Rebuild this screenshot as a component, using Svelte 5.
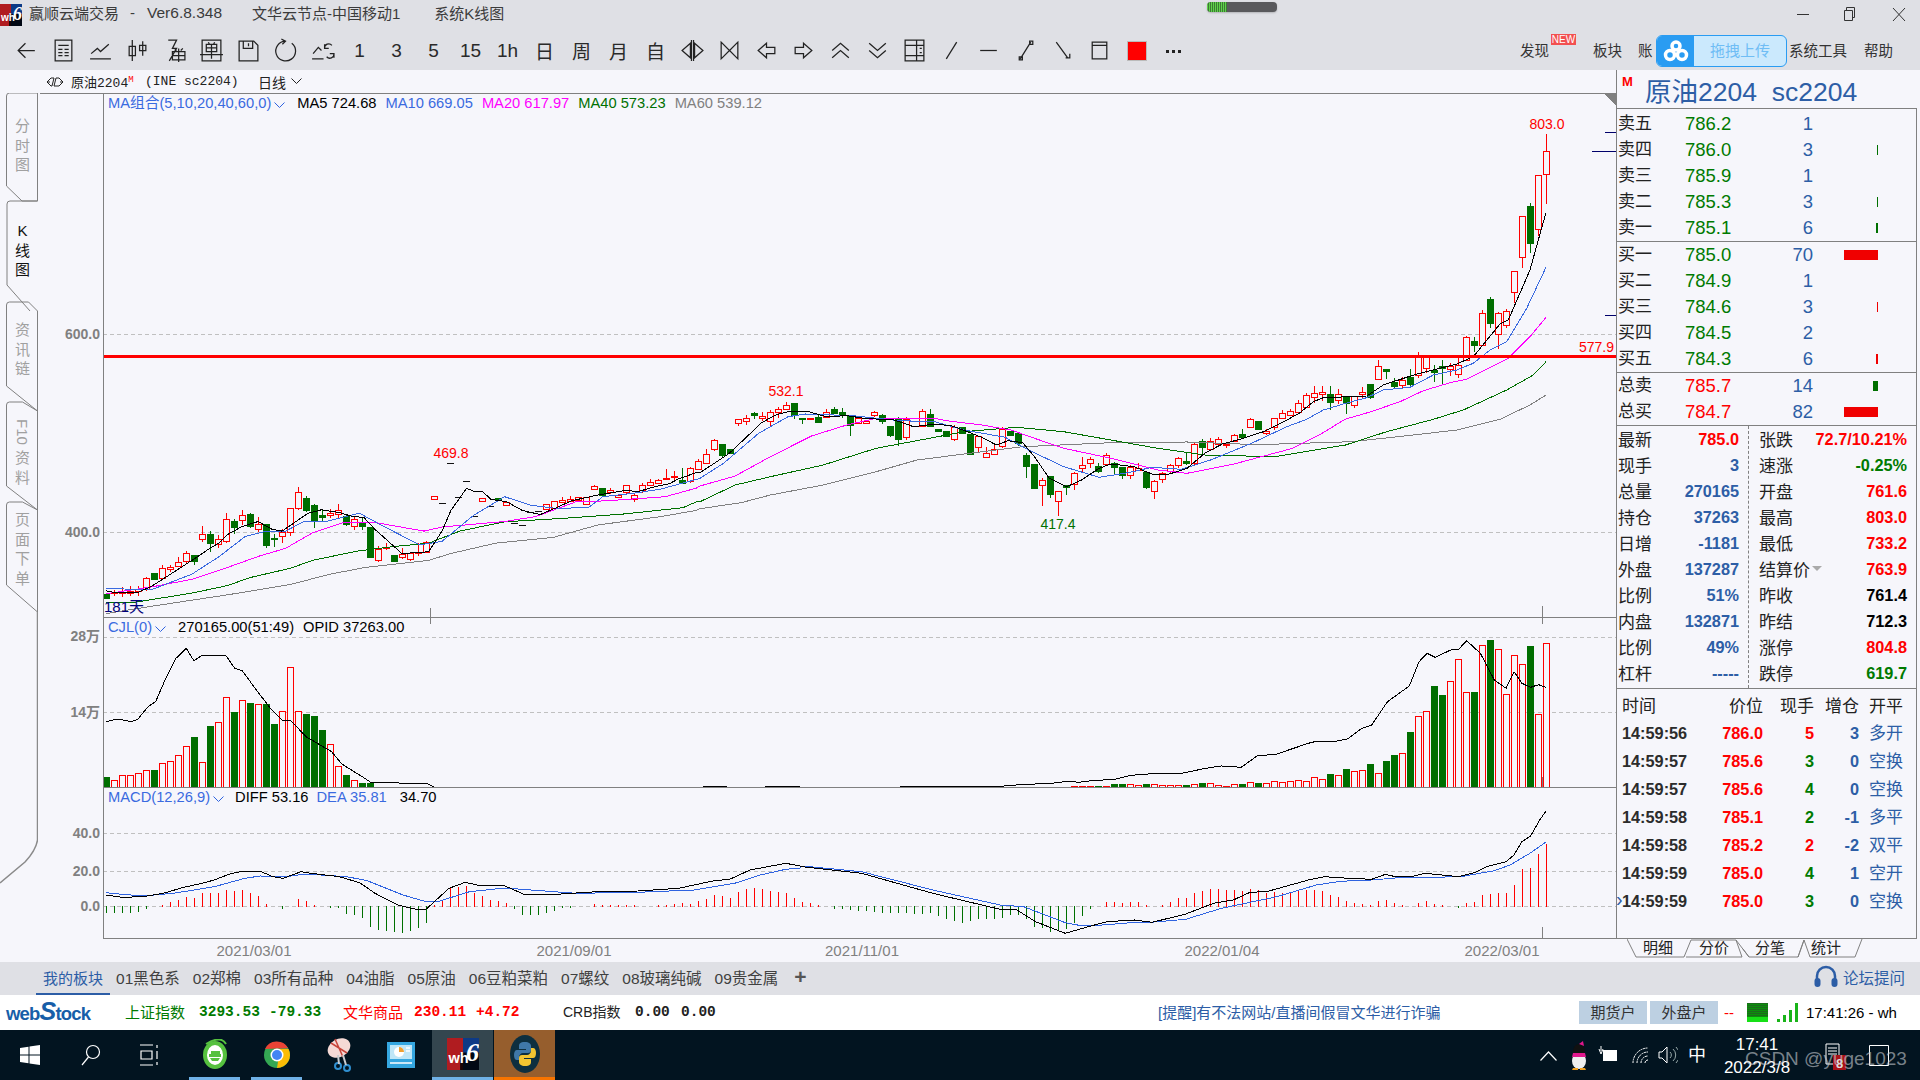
<script>
const BG = '#f6f6fb';
const z8 = ([x, y]) => [x / 2.24, 80 + y / 2.904];
const z9 = ([x, y]) => [700 + x / 1.704, 350 + y / 3];
const z12 = ([x, y]) => [1300 + x / 3, 100 + y / 3];
const z10 = ([x, y]) => [x / 1.96, 610 + y / 3];
const z11 = ([x, y]) => [1000 + x / 2.529, 610 + y / 3];
const xi = (i) => 106 + 8 * i;

// [kind(0 red,1 green,2 flat), top, bottom, wickTop, wickBottom]
const c8 = [[1,1494,1503],[0,1487,1490,1480,1497],[0,1488,1491,1472,1498],[0,1485,1489,1468,1495],[0,1477,1484,1470,1496],[0,1445,1478,1442,1480],[1,1433,1448],[0,1418,1445,1408,1447],[0,1415,1421,1408,1425],[0,1400,1410,1386,1412],[0,1374,1398,1368,1402],[1,1380,1397,1380,1406],[0,1317,1334,1296,1340],[1,1318,1346,1310,1368],[0,1334,1348,1322,1356],[0,1276,1340,1258,1342],[1,1282,1297,1275,1315],[0,1262,1279,1250,1290],[1,1260,1296,1258,1298],[0,1289,1305,1270,1310],[1,1290,1350,1290,1355],[1,1330,1334,1318,1352],[0,1314,1325,1305,1342],[0,1244,1313,1242,1320],[0,1195,1242,1183,1245],[1,1214,1248,1208,1252],[1,1234,1278,1232,1298],[1,1262,1268,1250,1282],[0,1258,1262,1245,1268],[0,1248,1260,1232,1268],[1,1265,1288,1262,1292],[0,1274,1296,1270,1304],[1,1286,1294,1270,1305],[1,1298,1385],[0,1361,1393,1354,1397],[0,1355,1358,1345,1362],[1,1380,1396],[0,1376,1386,1360,1388],[0,1375,1390,1370,1394],[0,1370,1373,1345,1378],[0,1341,1371,1338,1372],[0,1207,1218],[2,1228,1228],[2,1112,1112],[2,1210,1210],[2,1164,1164],[2,1266,1266],[0,1215,1223],[2,1236,1236],[1,1215,1220],[0,1225,1234],[2,1287,1287],[2,1293,1293],[2,1255,1255],[2,1252,1252],[0,1230,1245],[0,1222,1242],[0,1219,1226,1212,1226],[0,1216,1224,1207,1224],[0,1210,1220],[0,1210,1232],[0,1180,1189,1176,1189],[1,1186,1205],[0,1192,1196,1185,1200],[0,1206,1210],[0,1175,1197,1175,1200],[0,1205,1216,1200,1222],[0,1176,1192,1170,1196],[0,1168,1176,1160,1176],[0,1163,1170,1158,1170],[0,1155,1157,1130,1157],[0,1150,1153,1135,1160],[1,1163,1169,1127,1170],[0,1127,1165,1124,1168],[0,1107,1130,1100,1130]];
const c9 = [[0,313,338,298,340],[0,270,298,268,300],[1,283,315,283,318],[1,298,308],[0,208,220,208,226],[0,203,212,196,222],[1,190,196,186,204],[0,199,205,186,210],[0,185,214,180,224],[0,178,186,172,200],[0,164,178,156,178],[1,160,194,160,204],[1,205,208,205,220],[0,204,208],[1,202,215,195,215],[0,185,202,178,202],[1,178,188,172,188],[1,186,195,175,200],[1,199,224,199,254],[0,205,220,200,220],[0,214,220],[0,187,194,184,198],[1,196,214,192,220],[1,228,255,228,258],[1,208,268,200,285],[0,207,260,202,268],[2,228,228],[0,184,228,178,228],[1,192,228,178,228],[1,237,243],[1,244,258],[0,230,267,224,270],[1,230,248],[1,252,312],[0,258,290,258,305],[0,310,320,290,320],[0,298,312,285,312],[0,237,287,232,290],[1,242,255],[1,248,280,248,286],[1,314,348,310,380],[1,342,414],[0,391,404,385,465],[1,378,432,378,440],[0,422,452,422,495],[1,405,410,405,432],[0,370,402,365,418],[0,344,355,322,366],[0,328,338,322,350],[1,348,362,340,365],[0,316,342,308,345],[1,340,350,335,368],[1,352,375,352,385],[0,352,374,345,385],[0,354,360,340,360],[1,367,410,367,415],[0,394,424,390,444],[0,370,388,365,396],[0,344,362,342,370],[0,324,344,320,350],[1,333,340,306,342],[0,283,338,280,342],[1,273,291,268,315],[0,272,296,265,300],[0,268,282,262,282],[0,281,284,275,290],[0,256,272,252,272],[1,253,262,238,262],[0,208,230,205,230],[1,214,236],[0,243,248,236,252],[0,205,232,205,236],[0,190,203,180,203],[0,184,194,178,194],[0,158,185,150,185]];
const c12 = [[0,886,920,880,920],[0,880,892,858,905],[0,877,881,858,900],[1,883,905,858,928],[0,881,901,868,908],[1,892,908,892,940],[0,889,916,889,922],[0,877,881,862,892],[1,852,890,852,895],[0,799,838,780,838],[1,807,814,807,834],[1,846,858,835,860],[0,839,856,830,860],[1,831,851,808,855],[0,772,824,756,830],[0,770,805,770,815],[1,810,815,795,842],[1,799,804,780,852],[0,798,808,790,825],[0,795,822,775,832],[0,712,780,708,780],[1,723,735,712,752],[0,640,734,630,734],[1,598,668,590,680],[0,640,703,635,745],[0,634,675,628,680],[0,514,577,514,605],[0,349,472,349,500],[1,318,428,310,455],[0,226,388,226,405],[0,154,223,101,308]];

const toCandle = (conv) => ([k, t, b, wt, wb]) => {
  const top = Math.round(conv([0, t])[1]);
  const bot = Math.round(conv([0, b])[1]);
  return { k, top, bot, wt: Math.round(conv([0, wt ?? t])[1]), wb: Math.round(conv([0, wb ?? b])[1]) };
};
const candles = [
  ...c8.map(toCandle(z8)),
  ...c9.map(toCandle(z9)),
  ...c12.map(toCandle(z12))
].map((c, i) => ({ ...c, x: xi(i) }));

const join = (segs) => {
  let out = [];
  segs.forEach(([conv, pts], si) => {
    const next = segs[si + 1];
    const limit = next ? next[0](next[1][0])[0] : Infinity;
    out = out.concat(pts.map(conv).filter((p) => p[0] < limit));
  });
  return out.map((p) => p[0].toFixed(1) + ',' + p[1].toFixed(1)).join(' ');
};

const ma = [
  { c: '#808080', p: join([[z8,[[237,1550],[330,1530],[510,1495],[650,1465],[740,1435],[820,1415],[960,1395],[1010,1375],[1110,1345],[1240,1328],[1340,1292],[1480,1268],[1560,1250]]],[z9,[[0,476],[70,458],[120,435],[210,405],[300,365],[370,330],[450,312],[550,290],[700,278],[830,276],[950,284],[1110,275],[1200,258],[1290,240],[1370,208]]],[z12,[[600,958],[690,915],[738,885]]]]) },
  { c: '#007000', p: join([[z8,[[237,1517],[300,1517],[430,1490],[510,1468],[560,1445],[650,1418],[700,1395],[800,1368],[880,1355],[960,1345],[1030,1310],[1130,1283],[1260,1273],[1400,1260],[1530,1242],[1560,1225]]],[z9,[[0,455],[60,405],[120,380],[210,345],[300,295],[400,262],[450,245],[540,232],[620,245],[700,270],[780,295],[860,315],[980,320],[1100,285],[1170,245]]],[z12,[[400,958],[490,930],[620,870],[700,825],[738,785]]]]) },
  { c: '#ff00ff', p: join([[z8,[[237,1492],[340,1472],[430,1450],[500,1420],[580,1383],[640,1360],[700,1315],[770,1285],[840,1285],[950,1310],[990,1298],[1130,1282],[1200,1268],[1290,1225],[1360,1222],[1490,1210],[1560,1185]]],[z9,[[0,408],[60,378],[120,320],[190,258],[250,225],[300,205],[400,205],[420,212],[480,225],[530,240],[570,265],[620,295],[700,325],[780,360],[830,370],[910,342],[1010,295],[1060,250]]],[z12,[[135,958],[210,936],[300,905],[370,872],[450,848],[500,838],[625,775],[690,710],[738,652]]]]) },
  { c: '#3a6ae0', p: join([[z8,[[237,1477],[340,1480],[430,1435],[490,1385],[550,1325],[590,1312],[640,1310],[680,1282],[730,1282],[805,1258],[850,1290],[940,1350],[990,1340],[1060,1265],[1130,1210],[1190,1235],[1250,1245],[1320,1240],[1350,1210],[1420,1200],[1480,1188],[1560,1160]]],[z9,[[0,385],[40,340],[100,250],[150,200],[180,192],[260,197],[340,212],[400,215],[450,240],[520,262],[560,300],[620,350],[680,382],[730,368],[770,352],[820,358],[870,330],[940,280],[1000,230]]],[z12,[[20,958],[70,930],[130,912],[200,893],[250,870],[330,862],[400,825],[470,810],[520,790],[570,750],[620,725],[680,625],[738,502]]]]) },
  { c: '#000000', p: join([[z8,[[237,1483],[255,1488],[309,1488],[340,1470],[400,1420],[450,1378],[470,1360],[490,1345],[510,1320],[540,1298],[578,1282],[610,1305],[632,1310],[660,1285],[690,1258],[720,1248],[760,1256],[790,1268],[815,1270],[840,1305],[870,1340],[900,1375],[960,1370],[990,1310],[1010,1250],[1045,1186],[1065,1196],[1080,1194],[1100,1218],[1135,1225],[1170,1250],[1210,1262],[1250,1240],[1280,1222],[1340,1205],[1400,1192],[1430,1195],[1470,1180],[1500,1172],[1520,1158],[1560,1140]]],[z9,[[0,368],[20,345],[50,310],[80,260],[105,218],[130,194],[150,185],[185,185],[215,200],[250,197],[280,205],[330,210],[365,230],[400,222],[430,228],[460,248],[480,262],[505,285],[525,272],[550,278],[570,320],[595,385],[625,410],[650,390],[680,355],[700,342],[740,350],[760,365],[775,375],[800,372],[830,355],[860,310],[890,282],[920,268],[960,245],[1000,210]]],[z12,[[0,938],[40,905],[70,893],[200,888],[250,855],[350,822],[470,792],[520,770],[600,672],[625,660],[690,510],[715,420],[738,338]]]]) }
];

// volume
const vL = [[1,501],[0,511],[0,496],[0,496],[0,490],[0,481],[1,480],[0,460],[0,454],[0,436],[0,408],[1,381],[0,457],[1,348],[0,337],[0,262],[1,306],[0,271],[1,279],[0,283],[1,282],[1,342],[0,304],[0,172],[0,304],[1,312],[1,318],[1,360],[0,403],[0,469],[1,495],[0,511],[1,519],[1,519]];
const vR = [[0,529],[0,529],[0,529],[1,529],[0,529],[1,522],[1,522],[0,523],[0,526],[1,522],[0,523],[0,526],[0,526],[0,526],[1,525],[0,523],[1,519],[0,520],[0,526],[0,529],[0,522],[1,522],[0,517],[1,519],[0,520],[0,514],[0,517],[0,514],[0,511],[0,514],[0,502],[0,508],[1,492],[0,496],[1,477],[0,484],[0,481],[1,462],[0,490],[1,453],[1,435],[0,430],[1,366],[0,319],[0,304],[1,228],[1,255],[0,214],[0,148],[0,247],[1,246],[0,106],[1,91],[0,118],[0,253],[0,136],[0,163],[1,108],[0,313],[0,100]];
const vols = [
  ...vL.map(([k, t], i) => ({ k, x: xi(i), top: Math.round(610 + t / 3) })),
  ...vR.map(([k, t], i) => ({ k, x: xi(i + 121), top: Math.round(610 + t / 3) }))
];
const cjl = join([[z10,[[208,335],[230,327],[258,335],[270,328],[290,290],[305,275],[325,205],[345,145],[365,115],[380,152],[397,135],[442,135],[460,175],[475,182],[500,235],[530,295],[553,330],[570,332],[600,380],[650,425],[670,462],[710,500],[728,518],[780,518],[785,521],[838,521],[850,530]]]]);
const cjl2 = join([[z11,[[0,529],[50,524],[130,520],[170,514],[200,517],[230,512],[290,508],[330,496],[400,490],[460,490],[520,475],[560,468],[610,472],[650,438],[700,432],[780,400],[800,394],[850,394],[880,386],[915,355],[940,345],[980,275],[1035,228],[1060,155],[1080,130],[1100,142],[1140,120],[1160,118],[1180,92],[1215,130],[1250,210],[1280,235],[1300,185],[1320,220],[1342,232],[1362,224],[1381,232]]]]);

// macd bars as zoom-y of the bar end, zero at 889
const mb = [905,905,905,905,903,893,889,885,876,870,861,864,849,850,850,840,842,840,850,858,882,887,895,888,867,872,885,888,892,892,908,912,920,947,957,960,964,966,960,952,936,885,870,835,832,828,850,858,870,872,880,895,912,912,912,906,900,892,891,889,889,882,885,885,886,886,885,889,889,885,884,882,880,883,872,866,855,858,864,846,837,834,837,843,846,849,864,875,880,884,888,893,895,897,900,900,903,905,905,906,906,908,910,905,915,925,930,935,930,925,925,925,920,912,912,925,948,952,962,960,955,935,915,893,889,876,876,880,876,876,886,888,885,876,864,864,849,843,837,837,840,841,843,837,840,849,846,849,846,843,840,840,843,855,861,873,879,882,885,873,870,879,885,889,879,873,882,886,889,890,879,876,855,852,849,849,825,777,774,732,701];
const macdBars = mb.map((v, i) => ({ x: xi(i), y: Math.round(610 + v / 3), k: v > 889 ? 1 : 0 })).filter((b) => b.y !== 906);
const diff = join([[z10,[[208,855],[240,862],[280,860],[320,850],[360,832],[390,822],[420,810],[450,792],[475,784],[510,784],[535,800],[555,805],[590,785],[610,790],[665,800],[705,818],[735,850],[780,885],[815,898],[835,898],[880,835],[912,817],[935,825],[990,828],[1030,855],[1090,853],[1160,846],[1250,843],[1330,835],[1400,812],[1430,808],[1470,780],[1540,760],[1568,768]]],[z11,[[-500,770],[-350,790],[-170,850],[0,898],[40,898],[90,935],[165,970],[230,948],[270,935],[340,930],[385,937],[470,912],[540,880],[590,870],[630,848],[680,843],[780,810],[820,800],[870,804],[940,808],[975,793],[1000,800],[1040,800],[1075,790],[1160,800],[1200,788],[1230,770],[1280,755],[1300,735],[1320,695],[1342,678],[1365,630],[1381,603]]]]);
const dea = join([[z10,[[208,848],[240,853],[280,858],[340,850],[420,830],[480,805],[510,798],[560,800],[600,792],[680,800],[720,812],[790,855],[835,875],[860,874],[920,845],[990,834],[1040,840],[1130,850],[1250,847],[1360,840],[1440,820],[1490,795],[1540,778],[1568,774]]],[z11,[[-500,768],[-350,785],[-170,840],[0,885],[60,890],[165,938],[200,946],[250,946],[330,938],[390,936],[470,928],[560,895],[700,860],[800,825],[860,814],[940,810],[1000,804],[1165,800],[1250,782],[1290,765],[1340,730],[1381,696]]]]);

const grids = [334, 532, 637, 712, 833, 871, 906];
const axis = [['600.0',334],['400.0',532],['28万',636],['14万',712],['40.0',833],['20.0',871],['0.0',906]];
const dates = [['2021/03/01',254],['2021/09/01',574],['2021/11/01',862],['2022/01/04',1222],['2022/03/01',1502]];

const tools = [
  { d:'M20 12H4M11 5l-7 7 7 7' },
  { d:'M4 2h16v20H4zM7 7h10M7 11h4M13 11h4M7 14h4M13 14h4M7 17h4M13 17h4' },
  { d:'M2 20h20M3 15l6-5 3 3 8-7' },
  { d:'M7 2v20M4 8h6v9H4zM17 3v14M14 7h6v5h-6z' },
  { d:'M6 2h8l-4 8h4L7 22M10 13h12v8H10zM16 10v13M10 17h12M12 10l2 2M20 10l-2 2' },
  { d:'M3 2h18v20H3zM1 16h22M7 6h10v7H7zM7 9.500h10M12 6v14M9 4l1 2M15 4l-1 2' },
  { d:'M3 3h14l4 4v15H3zM7 3v7h9V3M12 5v3M3 22h18' },
  { d:'M12 3a9.500 9.500 0 1 0 6 2M8 1l4 2-3 3' },
  { d:'M2 20h11M3 15l5-6 3 3M21 7a4 4 0 0 0-7 3M14 6v4h4M16 18a4 4 0 0 0 7-3M23 19v-4h-4' },
  { t:'1' },{ t:'3' },{ t:'5' },{ t:'15' },{ t:'1h' },{ t:'日' },{ t:'周' },{ t:'月' },{ t:'自' },
  { d:'M10 5l-8 7 8 7zM14 5l8 7-8 7zM11 2v20M13 2v20' },
  { d:'M4 4l8 8-8 8zM20 4l-8 8 8 8z' },
  { d:'M12 5l-8 7 8 7v-4h8V9h-8z' },
  { d:'M12 5l8 7-8 7v-4H4V9h8z' },
  { d:'M4 12l8-7 8 7M4 19l8-7 8 7' },
  { d:'M4 5l8 7 8-7M4 12l8 7 8-7' },
  { d:'M3 2h18v20H3zM3 7h18M3 17h18M14 2v20M17 10h2M17 14h2' },
  { d:'M7 20L17 4' },
  { d:'M4 12h16' },
  { d:'M7 20L17 4M6 18h3v3H6zM16 3h3v3h-3z' },
  { d:'M6 4l11 15M15 19h4v-4' },
  { d:'M5 4h14v16H5zM5 7h14' },
  { red:true },
  { dots:true }
];

const asks = [['卖五','786.2',1,0],['卖四','786.0',3,1],['卖三','785.9',1,0],['卖二','785.3',3,1],['卖一','785.1',6,2]];
const bids = [['买一','785.0',70,34],['买二','784.9',1,0],['买三','784.6',3,1],['买四','784.5',2,0],['买五','784.3',6,2]];
const left = [['最新','785.0','r'],['现手','3','b'],['总量','270165','b'],['持仓','37263','b'],['日增','-1181','b'],['外盘','137287','b'],['比例','51%','b'],['内盘','132871','b'],['比例','49%','b'],['杠杆','-----','b']];
const right = [['张跌','72.7/10.21%','r'],['速涨','-0.25%','g'],['开盘','761.6','r'],['最高','803.0','r'],['最低','733.2','r'],['结算价','763.9','r'],['昨收','761.4','k'],['昨结','712.3','k'],['涨停','804.8','r'],['跌停','619.7','g']];
const trades = [['14:59:56','786.0','5','r','3','多开'],['14:59:57','785.6','3','g','0','空换'],['14:59:57','785.6','4','g','0','空换'],['14:59:58','785.1','2','g','-1','多平'],['14:59:58','785.2','2','r','-2','双平'],['14:59:59','785.0','4','g','1','空开'],['14:59:59','785.0','3','g','0','空换']];
const boards = ['01黑色系','02郑棉','03所有品种','04油脂','05原油','06豆粕菜粕','07螺纹','08玻璃纯碱','09贵金属'];
const rail = [['分','时','图'],['K','线','图'],['资','讯','链'],['F10','资','料'],['页','面','下','单']];
</script>

{#snippet chev()}
  <svg class="chev" width="11" height="7" viewBox="0 0 11 7"><path d="M.5.5l5 5 5-5" fill="none" stroke="currentColor"/></svg>
{/snippet}

{#snippet wh(size)}
  <svg width={size} height={size} viewBox="0 0 22 22">
    <rect width="11" height="22" fill="#b01c20"/><rect x="11" width="11" height="22" fill="#0d3a86"/>
    <rect x="9" y="10" width="13" height="12" fill="#000" opacity=".85"/>
    <text x="1" y="17" class="whtext">wh</text>
    <text x="13" y="16" class="whsix">6</text>
  </svg>
{/snippet}

<div class="app">
  <header class="title">
    <span class="logo">{@render wh(22)}</span>
    <span class="t1">赢顺云端交易</span><span class="t2">-</span><span class="t3">Ver6.8.348</span>
    <span class="t4">文华云节点-中国移动1</span><span class="t5">系统K线图</span>
    <span class="pill"><i></i></span>
    <span class="win">
      <svg width="112" height="16" viewBox="0 0 112 16"><path d="M1 8.500h12M48.500 4.500h8v10h-8zM50.500 4.500V1.500h8v10h-2M97 2l12 13M109 2L97 15" fill="none" stroke="#333"/></svg>
    </span>
  </header>

  <nav class="tools">
    <div class="toolset">
      {#each tools as it}
        <span class="tool">
          {#if it.d}
            <svg width="25" height="25" viewBox="0 0 24 24"><path d={it.d} fill="none" stroke="#222" stroke-width="1.200"/></svg>
          {:else if it.red}
            <i class="redsq"></i>
          {:else if it.dots}
            <svg width="18" height="4" viewBox="0 0 18 4"><path d="M1 1h3v3H1zM7 1h3v3H7zM13 1h3v3h-3z" fill="#222"/></svg>
          {:else}
            <span class="tooltxt">{it.t}</span>
          {/if}
        </span>
      {/each}
    </div>
    <div class="menu">
      <span class="m1">发现<i class="new">NEW</i></span>
      <span class="m2">板块</span>
      <span class="m3">账</span>
      <span class="upload">
        <span class="ucloud"><svg width="26" height="22" viewBox="0 0 26 22"><g fill="none" stroke="#fff" stroke-width="3.500"><circle cx="13" cy="6" r="4"/><circle cx="7" cy="15" r="4.500"/><circle cx="19" cy="15" r="4.500"/></g></svg></span>
        <span class="utext">拖拽上传</span>
      </span>
      <span class="m4">系统工具</span>
      <span class="m5">帮助</span>
    </div>
  </nav>

  <div class="body">
    <section class="leftside">
      <div class="sub">
        <svg class="subicon" width="18" height="10" viewBox="0 0 18 10"><path d="M1 5l4-4h3l-2 8H5zM17 5l-4-4h-3l-2 8h5z" fill="none" stroke="#222"/><path d="M1 5h3M14 5h3" stroke="#222"/></svg>
        <span class="subname">原油2204<sup>M</sup></span>
        <span class="subcode">(INE sc2204)</span>
        <span class="subperiod">日线</span>
        <span class="subchev">{@render chev()}</span>
      </div>
      <div class="chartrow">
        <aside class="rail">
          <svg class="railart" width="38" height="869" viewBox="0 93 38 869">
            <g fill="none" stroke="#808080">
              <path d="M37.500 201H22L6.500 186V96q0-3 3-3h28V201"/>
              <path d="M37.500 201H10q-3 0-3 3v81l23 26"/>
              <path d="M37.500 411L6.500 386V305q0-3 3-3h19l9 9v100"/>
              <path d="M37.500 510L6.500 486V405q0-3 3-3h13l15 9v99"/>
              <path d="M37.500 612L6.500 585V505q0-3 3-3h13l15 8v102"/>
            </g>
            <path d="M37.500 612V840Q36 850 25 862L0 883" fill="none" stroke="#8a8a8a" stroke-width="1.500"/>
          </svg>
          {#each rail as tab, i}
            <div class="railtab rt{i}" class:on={i === 1}>
              {#each tab as ch}<span class:rot={ch === 'F10'}>{ch}</span>{/each}
            </div>
          {/each}
        </aside>

        <div class="chart">
          <svg class="plot" width="1578" height="869" viewBox="38 93 1578 869">
            {#each grids as y}
              <line x1="103" x2="1616" y1={y + .5} y2={y + .5} class="grid"/>
            {/each}

            <g>
              {#each candles as c}
                {#if c.k === 2}
                  <line x1={c.x - 3} x2={c.x + 4} y1={c.top + .5} y2={c.top + .5} stroke="#111"/>
                {:else}
                  <line x1={c.x + .5} x2={c.x + .5} y1={c.wt} y2={c.wb + 1} stroke={c.k ? '#006e00' : '#f00'}/>
                  {#if c.k}
                    <rect x={c.x - 3} y={c.top} width="7" height={c.bot - c.top + 1} fill="#006e00"/>
                  {:else}
                    <rect x={c.x - 2.5} y={c.top + .5} width="6" height={Math.max(c.bot - c.top, 1)} fill={BG} stroke="#f00"/>
                  {/if}
                {/if}
              {/each}
            </g>
            {#each ma as m}
              <polyline points={m.p} fill="none" stroke={m.c}/>
            {/each}

            <rect x="103" y="355" width="1513" height="3" fill="#f00"/>
            <g stroke="#00006a">
              <line x1="1605" x2="1616" y1="132.500" y2="132.500"/>
              <line x1="1592" x2="1616" y1="151.500" y2="151.500"/>
              <line x1="1605" x2="1616" y1="315.500" y2="315.500"/>
            </g>

            <text x="1547" y="129" class="lab red" text-anchor="middle">803.0</text>
            <text x="1614" y="352" class="lab red" text-anchor="end">577.9</text>
            <text x="451" y="458" class="lab red" text-anchor="middle">469.8</text>
            <text x="786" y="396" class="lab red" text-anchor="middle">532.1</text>
            <text x="1058" y="529" class="lab grn" text-anchor="middle">417.4</text>
            <text x="104" y="612" class="navy">181天</text>

            <!-- volume -->
            {#each vols as v}
              {#if v.k}
                <rect x={v.x - 3} y={v.top} width="7" height={787 - v.top} fill="#006e00"/>
              {:else}
                <rect x={v.x - 2.5} y={v.top + .5} width="6" height={787 - v.top} fill={BG} stroke="#f00"/>
              {/if}
            {/each}
            <polyline points={cjl} fill="none" stroke="#000"/>
            <polyline points={cjl2} fill="none" stroke="#000"/>
            <path d="M703 786.500H727M765 786.500H800M900 786.500H1000" stroke="#000" fill="none"/>

            <!-- macd -->
            {#each macdBars as b}
              <line x1={b.x + .5} x2={b.x + .5} y1={Math.min(b.y, 906)} y2={Math.max(b.y, 906) + 1} stroke={b.k ? '#007000' : '#f00'}/>
            {/each}
            <polyline points={dea} fill="none" stroke="#2f63e0"/>
            <polyline points={diff} fill="none" stroke="#000"/>

            <!-- ticks -->
            <g stroke="#808080">
              <line x1="430.500" x2="430.500" y1="608" y2="624"/>
              <line x1="1542.500" x2="1542.500" y1="606" y2="624"/>
              <line x1="1542.500" x2="1542.500" y1="777" y2="787"/>
              <line x1="1542.500" x2="1542.500" y1="927" y2="938"/>
            </g>

            <!-- frames -->
            <g stroke="#808080" fill="none">
              <path d="M103.500 93V938.500H1616M40 93.500H1616.500V938M103 617.500H1616M103 787.500H1616"/>
            </g>
            <path d="M1605 94h11v12z" fill="#808080"/>

            {#each axis as [t, y]}
              <text x="100" y={y + 5} class="axis" text-anchor="end">{t}</text>
            {/each}
            {#each dates as [t, x]}
              <text x={x} y="956" class="date" text-anchor="middle">{t}</text>
            {/each}
          </svg>

          <div class="legend l1">
            <span class="blue">MA组合(5,10,20,40,60,0){@render chev()}</span>
            <span class="k">MA5 724.68</span>
            <span class="blue">MA10 669.05</span>
            <span class="mag">MA20 617.97</span>
            <span class="grn2">MA40 573.23</span>
            <span class="gray">MA60 539.12</span>
          </div>
          <div class="legend l2">
            <span class="blue">CJL(0){@render chev()}</span>
            <span class="k">270165.00(51:49)</span>
            <span class="k">OPID 37263.00</span>
          </div>
          <div class="legend l3">
            <span class="blue">MACD(12,26,9){@render chev()}</span>
            <span class="k">DIFF 53.16</span>
            <span class="blue">DEA 35.81</span>
            <span class="k l3last">34.70</span>
          </div>
        </div>
      </div>
    </section>

    <aside class="panel">
      <div class="ptitle"><b>M</b><span class="pname">原油2204  sc2204</span></div>
      <div class="book asks">
        {#each asks as [l, p, q, w]}
          <div class="brow"><span>{l}</span><span class="g">{p}</span><span class="bq">{q}</span><span class="bb"><i class="gb" style="width:{w}px"></i></span></div>
        {/each}
      </div>
      <div class="book bids">
        {#each bids as [l, p, q, w]}
          <div class="brow"><span>{l}</span><span class="g">{p}</span><span class="bq">{q}</span><span class="bb"><i class="rb" style="width:{w}px"></i></span></div>
        {/each}
      </div>
      <div class="book totals">
        <div class="brow"><span>总卖</span><span class="r">785.7</span><span class="bq">14</span><span class="bb"><i class="gb" style="width:5px"></i></span></div>
        <div class="brow"><span>总买</span><span class="r">784.7</span><span class="bq">82</span><span class="bb"><i class="rb" style="width:34px"></i></span></div>
      </div>
      <div class="stats">
        <div class="scol sl">
          {#each left as [l, v, c]}
            <div class="srow"><span>{l}</span><b class={c}>{v}</b></div>
          {/each}
        </div>
        <div class="scol sr">
          {#each right as [l, v, c]}
            <div class="srow"><span class="slab">{l}{#if l === '结算价'}<i class="tri"></i>{/if}</span><b class={c}>{v}</b></div>
          {/each}
        </div>
      </div>
      <div class="thead">
        <span>时间</span><span class="ar">价位</span><span class="ar">现手</span><span class="ar">增仓</span><span class="open">开平</span>
      </div>
      <div class="tlist">
        {#each trades as [t, p, q, c, z, o], i}
          <div class="trow">
            {#if i === trades.length - 1}<i class="mark">›</i>{/if}
            <b class="tm">{t}</b><b class="r ar">{p}</b><b class="{c} ar">{q}</b><b class="b ar">{z}</b><span class="open b">{o}</span>
          </div>
        {/each}
      </div>
      <div class="ptabs">
        <svg class="ptabart" width="240" height="19" viewBox="0 0 240 19">
          <path d="M0 0L9 18H57L64 1H109L115 18H59M109 1L122 18H171L177 1M122 18L116 10M177 1L183 18H228L235 0M171 18L177 1" fill="none" stroke="#808080"/>
        </svg>
        <span>明细</span><span>分价</span><span>分笔</span><span>统计</span>
      </div>
    </aside>
  </div>

  <div class="boards">
    <span class="bon">我的板块</span>
    {#each boards as b}<span>{b}</span>{/each}
    <span class="plus">+</span>
    <span class="forum">
      <svg width="26" height="24" viewBox="0 0 26 24"><path d="M4 18v-7a9 9 0 0 1 18 0v7" fill="none" stroke="#2c5da6" stroke-width="2.500"/><rect x="1.500" y="13" width="6" height="9" rx="3" fill="#2c5da6"/><rect x="18.500" y="13" width="6" height="9" rx="3" fill="#2c5da6"/></svg>
      论坛提问
    </span>
  </div>

  <footer class="status">
    <span class="webstock"><em>web</em><em class="bigs">S</em><em>tock</em></span>
    <span class="idx g sg1">上证指数</span><b class="mono g sg2">3293.53</b><b class="mono g sg3">-79.33</b>
    <span class="idx r sr1">文华商品</span><b class="mono r sr2">230.11</b><b class="mono r sr3">+4.72</b>
    <span class="idx crb">CRB指数</span><b class="mono dk sc2">0.00</b><b class="mono dk sc3">0.00</b>
    <span class="notice">[提醒]有不法网站/直播间假冒文华进行诈骗</span>
    <span class="acct a1">期货户</span><span class="acct a2">外盘户</span>
    <span class="dash">--</span>
    <span class="meter"></span>
    <svg class="bars" width="21" height="19" viewBox="0 0 21 19"><path d="M0 16h3v3H0zM6 12h3v7H6zM12 7h3v12h-3zM18 0h3v19h-3z" fill="#19b419"/></svg>
    <span class="clock">17:41:26 - wh</span>
  </footer>

  <div class="taskbar">
    <svg class="tk1" width="20" height="20" viewBox="0 0 20 20"><path d="M0 3l8.500-1.200v7.700H0zM9.500 1.600L20 0v9.500H9.500zM0 10.500h8.500v7.700L0 17zM9.500 10.500H20V20L9.500 18.400z" fill="#fff"/></svg>
    <svg class="tk2" width="20" height="22" viewBox="0 0 20 22"><circle cx="12" cy="8" r="6.500" fill="none" stroke="#fff" stroke-width="1.200"/><path d="M7.500 13L1 21" stroke="#fff" stroke-width="1.200"/></svg>
    <svg class="tk3" width="20" height="22" viewBox="0 0 20 22"><path d="M0 1h13M0 21h13M1 7h11v8H1zM17 1v3M17 7v8M17 18v3" fill="none" stroke="#fff" stroke-width="1.200"/></svg>
    <span class="tbtn tb1 runs"><svg width="28" height="32" viewBox="0 0 28 32"><ellipse cx="14" cy="16" rx="12" ry="14" fill="#56c13f"/><ellipse cx="14" cy="16" rx="8" ry="10" fill="#fff"/><path d="M8 15h12v3H8zM10 12h9v3h-9zM9 19h10l-2 3h-6z" fill="#56c13f"/><path d="M5 5Q20-4 25 5" fill="none" stroke="#56c13f" stroke-width="2"/></svg></span>
    <span class="tbtn tb2 runs"><svg width="28" height="32" viewBox="0 0 28 32"><circle cx="14" cy="16" r="13" fill="#34a853"/><path d="M14 3a13 13 0 0 1 11.300 6.500H14z M2 10a13 13 0 0 1 23-1L14 9.500z" fill="#ea4335"/><path d="M14 29a13 13 0 0 0 11.500-19H17z" fill="#fbbc05"/><circle cx="14" cy="16" r="6.500" fill="#fff"/><circle cx="14" cy="16" r="5" fill="#4285f4"/></svg></span>
    <span class="tbtn tb3"><svg width="32" height="36" viewBox="0 0 32 36"><ellipse cx="16" cy="11" rx="12" ry="9" transform="rotate(-30 16 11)" fill="#f5d9d5"/><path d="M8 6l16 10M12 2l8 18" stroke="#c7443a" stroke-width="1.500"/><circle cx="15" cy="29" r="3" fill="none" stroke="#2f8fd0" stroke-width="2"/><circle cx="24" cy="31" r="3" fill="none" stroke="#2f8fd0" stroke-width="2"/><path d="M15 18l1 9M20 18l3 10" stroke="#c9ccd0" stroke-width="2"/></svg></span>
    <span class="tbtn tb4"><svg width="28" height="26" viewBox="0 0 28 26"><rect width="28" height="26" fill="#35a7e0"/><rect x="3" y="3" width="22" height="14" fill="#bfe6f7"/><circle cx="12" cy="10" r="5" fill="#fff"/><path d="M12 10V5a5 5 0 0 1 5 5z" fill="#f0a030"/><path d="M19 6h4M19 9h4M3 21h22" stroke="#fff" stroke-width="1.500"/></svg></span>
    <span class="tbtn tb5">{@render wh(32)}</span>
    <span class="tbtn tb6"><svg width="32" height="38" viewBox="0 0 32 38"><ellipse cx="16" cy="19" rx="15" ry="19" fill="#0d2f3f"/><path d="M16 7c-5 0-6 2-6 4v3h7v1H8c-2 0-3 2-3 5s1 5 3 5h2v-3c0-2 2-4 4-4h5c2 0 3-1 3-3v-4c0-2-2-4-6-4z" fill="#3f78a8"/><path d="M16 31c5 0 6-2 6-4v-3h-7v-1h9c2 0 3-2 3-5s-1-5-3-5h-2v3c0 2-2 4-4 4h-5c-2 0-3 1-3 3v4c0 2 2 4 6 4z" fill="#f2c531"/></svg></span>
    <div class="tray">
      <svg class="tr1" width="17" height="10" viewBox="0 0 17 10"><path d="M.5 9.500L8.500 1l8 8.500" fill="none" stroke="#fff" stroke-width="1.200"/></svg>
      <svg class="tr2" width="18" height="32" viewBox="0 0 18 32"><ellipse cx="9" cy="12" rx="6" ry="8" fill="#111"/><ellipse cx="9" cy="21" rx="7" ry="8" fill="#eee"/><path d="M3 13h12l1 4H2z" fill="#e0178c"/><path d="M9 4l4-3 1 5z" fill="#e0178c"/><path d="M3 28h5v2H2zM10 28h5l1 2h-6z" fill="#f0a020"/></svg>
      <svg class="tr3" width="20" height="20" viewBox="0 0 20 20"><rect x="5" y="5" width="14" height="11" fill="#fff"/><path d="M3 1v5M1 4l2 5 2-5" stroke="#fff" fill="none"/></svg>
      <svg class="tr4" width="16" height="18" viewBox="0 0 16 18"><path d="M1 17a15 15 0 0 1 15-15M5 17a11 11 0 0 1 11-11M9 17a7 7 0 0 1 7-7M13 17a3 3 0 0 1 3-3" fill="none" stroke="#fff" stroke-dasharray="2 .6"/></svg>
      <svg class="tr5" width="20" height="20" viewBox="0 0 20 20"><path d="M1 7h3l5-5v16l-5-5H1z" fill="none" stroke="#fff"/><path d="M12 7a4 4 0 0 1 0 6M15 4a8 8 0 0 1 0 12M18 2a11 11 0 0 1 0 16" fill="none" stroke="#9aa" /></svg>
      <span class="ime">中</span>
      <div class="tclock"><span>17:41</span><span>2022/3/8</span></div>
      <svg class="tr6" width="26" height="28" viewBox="0 0 26 28"><path d="M6 1h13v20H6z" fill="none" stroke="#fff"/><path d="M8 5h9M8 8h9M8 11h9" stroke="#fff"/><rect x="13" y="12" width="13" height="15" fill="#a81118"/><text x="19.500" y="25" class="badge" text-anchor="middle">8</text></svg>
      <svg class="tr7" width="20" height="22" viewBox="0 0 20 22"><path d="M.5.5h19v20H.5z" fill="none" stroke="#fff"/></svg>
    </div>
    <span class="mark-wm">CSDN @yuge1023</span>
  </div>
</div>

<style>
:global(body) { margin: 0; background: #f6f6fb; }
.app {
  width: 1920px; height: 1080px; display: flex; flex-direction: column; overflow: hidden;
  font-family: "Liberation Sans", "Noto Sans CJK SC", sans-serif; color: #222; background: #f6f6fb;
  font-size: 15px;
}
.title { height: 31px; box-sizing: border-box; padding-bottom: 6px; display: flex; align-items: center; background: #dfe0e5; color: #3b3b3b; position: relative; }
.logo { width: 29px; height: 22px; line-height: 0; margin-top: 5px; }
.t2 { margin-left: 11px; } .t3 { margin-left: 12px; font-size: 15.500px; } .t4 { margin-left: 30px; } .t5 { margin-left: 34px; }
.pill { position: absolute; left: 1207px; top: 2px; width: 70px; height: 10px; border-radius: 4px; background: #59595c; box-shadow: 0 1px 2px #0003; overflow: hidden; }
.pill i { display: block; width: 20px; height: 10px; background: repeating-linear-gradient(90deg, #5fd24a 0 1px, #3b7a34 1px 2px); }
.win { margin-left: auto; margin-right: 12px; line-height: 0; margin-top: 3px; }
.tools { height: 39px; display: flex; align-items: center; background: #dfe0e5; }
.toolset { display: flex; margin-left: 8px; width: 1190px; flex: none; }
.tool { width: 37px; height: 30px; display: flex; align-items: center; justify-content: center; flex: none; }
.tooltxt { font-size: 19px; color: #2a2a2a; font-weight: 400; }
.redsq { width: 18px; height: 18px; background: #f00; border: 1px solid #bbb; display: block; }
.menu { display: flex; align-items: center; margin-left: auto; position: relative; height: 32px; width: 399px; color: #333; font-size: 14.500px; flex: none; }
.menu > span { position: absolute; top: 4px; white-space: nowrap; }
.m1 { left: -1px; } .m2 { left: 72px; } .m3 { left: 117px; } .m4 { left: 268px; } .m5 { left: 343px; }
.new { position: absolute; left: 31px; top: -5px; width: 25px; height: 11px; background: #f25050; color: #fff; font: 10px/11px "Liberation Sans", sans-serif; text-align: center; }
.menu > .upload { left: 135px; top: 0; width: 131px; height: 32px; box-sizing: border-box; border: 1px solid #2a9cf2; border-radius: 6px; display: flex; overflow: hidden; background: #cbe9fd; }
.ucloud { width: 37px; background: #2a9cf2; display: flex; align-items: center; justify-content: center; }
.utext { flex: 1; text-align: center; line-height: 30px; color: #6fbdf5; font-size: 15px; }
.body { height: 892px; display: flex; }
.leftside { width: 1616px; display: flex; flex-direction: column; }
.sub { height: 23px; display: flex; align-items: center; padding-left: 46px; font-size: 14px; color: #222; }
.subname { margin-left: 7px; font-family: "Liberation Mono", "Noto Sans CJK SC", monospace; font-size: 13px; width: 74px; white-space: nowrap; }
.subname sup { color: #f00; font-size: 9px; vertical-align: 5px; line-height: 0; }
.subcode { font-family: "Liberation Mono", monospace; font-size: 13px; width: 113px; white-space: nowrap; }
.subperiod { font-size: 14px; }
.subchev { margin-left: 2px; color: #222; line-height: 0; }
.chartrow { display: flex; height: 869px; }
.rail { width: 38px; position: relative; flex: none; }
.railart { position: absolute; left: 0; top: 0; }
.railtab { position: relative; display: flex; flex-direction: column; align-items: center; color: #a0a0a0; padding-left: 7px; font-size: 15px; line-height: 19.500px; box-sizing: border-box; }
.railtab.on { color: #111; }
.rt0 { height: 108px; padding-top: 23px; }
.rt1 { height: 99px; padding-top: 20px; }
.rt2 { height: 109px; padding-top: 20px; }
.rt3 { height: 91px; padding-top: 10px; }
.rt4 { height: 112px; padding-top: 10px; }
.rot { writing-mode: vertical-rl; height: 29px; line-height: 15px; }
.chart { position: relative; width: 1578px; height: 869px; }
.plot { display: block; shape-rendering: crispEdges; }
.grid { stroke: #c0c0c0; stroke-dasharray: 4 3; }
.lab { font-size: 14px; }
.red { fill: #f00; } .grn { fill: #007000; }
.navy { fill: #00007a; font-size: 15px; }
.axis { fill: #808080; font-size: 14px; font-weight: 700; }
.date { fill: #808080; font-size: 15px; }
.legend { position: absolute; display: flex; gap: 9px; font-size: 14.700px; white-space: nowrap; line-height: 18px; }
.l1 { left: 70px; top: 1px; }
.l2 { left: 70px; top: 525px; gap: 9px; }
.l3 { left: 70px; top: 695px; gap: 8px; }
.l3last { margin-left: 5px; }
.blue { color: #3a6ae0; } .k { color: #000; } .mag { color: #f0f; } .grn2 { color: #007000; } .gray { color: #808080; }
.chev { margin-left: 3px; vertical-align: -1px; }
.legend .blue:first-child .chev { margin-right: 3px; color: #2f63e0; }
.whtext { font: 700 10px "Liberation Sans", sans-serif; fill: #fff; }
.whsix { font: italic 700 18px "Liberation Serif", serif; fill: #fff; }
.panel { width: 304px; box-sizing: border-box; position: relative; height: 892px; }
.ptitle { height: 39px; box-sizing: border-box; border-left: 1px solid #808080; border-bottom: 1px solid #808080; display: flex; align-items: center; color: #2d5ea6; font-size: 26.500px; position: relative; padding-left: 28px; width: 301px; white-space: pre; }
.ptitle b { position: absolute; left: 5px; top: 5px; color: #f00; font-size: 13px; line-height: 13px; }
.book { width: 301px; box-sizing: border-box; border-left: 1px solid #808080; border-right: 1px solid #808080; border-bottom: 1px solid #808080; }
.brow { height: 26px; display: grid; grid-template-columns: 67px 74px 54px 65px; padding-left: 1px; align-items: center; font-size: 18.500px; line-height: 26px; }
.asks { padding-top: 2px; height: 133px; }
.bids { height: 131px; }
.totals { height: 53px; }
.brow > span:first-child { font-size: 17px; }
.g { color: #007a00; } .r { color: #f00; } .b { color: #2d5ea6; } .k { color: #000; }
.bq { text-align: right; color: #2d5ea6; }
.bb { display: flex; justify-content: flex-end; }
.bb i { height: 10px; display: block; }
.gb { background: #007000; } .rb { background: #f00000; }
.stats { width: 301px; height: 263px; box-sizing: border-box; display: flex; border-left: 1px solid #808080; border-right: 1px solid #808080; border-bottom: 1px solid #808080; }
.scol { display: flex; flex-direction: column; padding-top: 0; }
.sl { width: 132px; box-sizing: border-box; padding: 0 9px 0 1px; border-right: 1px dashed #808080; }
.sr { flex: 1; padding: 0 9px 0 10px; }
.srow { height: 26px; display: flex; justify-content: space-between; align-items: center; font-size: 17px; }
.srow > span { margin-top: -2px; }
.srow b { font-size: 16.300px; }
.slab { position: relative; white-space: nowrap; }
.tri { display: inline-block; width: 0; height: 0; border: 5px solid transparent; border-top-color: #aaa; vertical-align: -6px; margin-left: 2px; position: absolute; top: 10px; }
.thead, .trow { display: grid; grid-template-columns: 70px 71px 51px 45px 44px; padding-left: 5px; align-items: center; }
.thead { width: 301px; box-sizing: border-box; border-left: 1px solid #808080; border-right: 1px solid #808080; height: 30px; font-size: 17px; }
.tlist { width: 301px; box-sizing: border-box; border-left: 1px solid #808080; border-right: 1px solid #808080; border-bottom: 1px solid #808080; height: 220px; }
.trow { height: 28px; font-size: 16.300px; position: relative; }
.tm { color: #2c2c2c; }
.ar { text-align: right; }
.open { font-size: 17px; padding-left: 10px; white-space: nowrap; }
.trow .open { margin-top: -3px; }
.mark { position: absolute; left: -1px; top: 1px; color: #2d5ea6; font-style: normal; font-size: 20px; line-height: 22px; }
.ptabs { position: relative; display: flex; width: 240px; margin-left: 11px; height: 19px; font-size: 15px; line-height: 18px; padding-left: 3px; box-sizing: border-box; }
.ptabs span { width: 56px; position: relative; text-align: center; color: #222; }
.ptabart { position: absolute; left: 0; top: 0; }
.boards { height: 33px; box-sizing: border-box; padding-bottom: 3px; background: #dfe0e5; display: flex; align-items: center; gap: 13px; padding-left: 43px; font-size: 15.500px; color: #404040; position: relative; }
.bon { color: #2c5da6; position: relative; font-size: 15px; }
.bon::after { content: ""; position: absolute; left: -7px; right: -7px; bottom: -7px; height: 2px; background: #2c5da6; }
.plus { font-size: 21px; font-weight: 700; color: #555; line-height: 20px; margin-left: 3px; }
.forum { margin-left: auto; margin-right: 15px; color: #2c5da6; display: flex; align-items: center; gap: 4px; }
.status { height: 35px; background: #fff; position: relative; }
.status > * { position: absolute; top: 8px; white-space: nowrap; line-height: 19px; }
.webstock { left: 6px; top: 3px; color: #175ea8; font-size: 18.500px; font-weight: 700; letter-spacing: -.8px; line-height: 26px; }
.webstock em { font-style: normal; }
.bigs { font-size: 25px; font-style: italic !important; }
.mono { font-family: "Liberation Mono", monospace; font-size: 14.500px; }
.dk { color: #222; }
.sg1 { left: 125px; } .sg2 { left: 199px; } .sg3 { left: 269px; }
.sr1 { left: 343px; } .sr2 { left: 414px; } .sr3 { left: 476px; }
.crb { left: 563px; color: #222; font-size: 14px; } .sc2 { left: 635px; } .sc3 { left: 681px; }
.notice { left: 1158px; color: #2c5da6; font-size: 15px; }
.acct { top: 6px !important; height: 23px; line-height: 23px !important; width: 68px; text-align: center; background: #bdd0e2; color: #333; font-size: 15px; }
.a1 { left: 1579px; } .a2 { left: 1650px; }
.dash { left: 1724px; color: #f00; font-size: 15px; }
.meter { left: 1747px; width: 21px; height: 19px; background: repeating-linear-gradient(0deg, #0b8f0b 0 1px, #1d6a1d 1px 2px); border-bottom: 5px solid #17e017; box-sizing: border-box; }
.bars { left: 1777px; }
.clock { left: 1806px; color: #000; font-size: 15px; }
.taskbar { height: 50px; background: #021420; display: flex; align-items: center; position: relative; color: #fff; }
.tk1 { margin-left: 20px; flex: none; } .tk2 { margin-left: 41px; flex: none; } .tk3 { margin-left: 39px; flex: none; }
.tbtn { height: 50px; display: flex; align-items: center; justify-content: center; flex: none; box-sizing: border-box; position: relative; }
.tb1 { width: 51px; margin-left: 29px; } .tb2 { width: 51px; margin-left: 11px; } .tb3 { width: 51px; margin-left: 11px; } .tb4 { width: 51px; margin-left: 11px; }
.tb5 { width: 61px; margin-left: 6px; background: #34464f; border-bottom: 3px solid #6fb1e6; }
.tb6 { width: 61px; margin-left: 1px; background: #965e2d; border-bottom: 3px solid #f77400; }
.runs::after { content: ""; position: absolute; left: 0; right: 0; bottom: 0; height: 3px; background: #6fb1e6; }
.tray { margin-left: auto; display: flex; align-items: center; height: 50px; position: relative; width: 380px; }
.tray > * { position: absolute; }
.tr1 { left: 0; top: 21px; } .tr2 { left: 30px; top: 10px; } .tr3 { left: 58px; top: 15px; } .tr4 { left: 92px; top: 16px; } .tr5 { left: 118px; top: 15px; }
.ime { left: 148px; top: 13px; font-size: 18px; line-height: 24px; }
.tclock { left: 184px; top: 3px; width: 66px; display: flex; flex-direction: column; align-items: center; font-size: 17px; line-height: 23px; }
.tr6 { left: 280px; top: 13px; } .tr7 { left: 329px; top: 15px; }
.badge { font: 700 13px "Liberation Sans", sans-serif; fill: #ddd; }
.mark-wm { position: absolute; left: 1745px; top: 17px; font-size: 19px; line-height: 24px; color: rgba(200,205,210,.6); white-space: nowrap; }
</style>
